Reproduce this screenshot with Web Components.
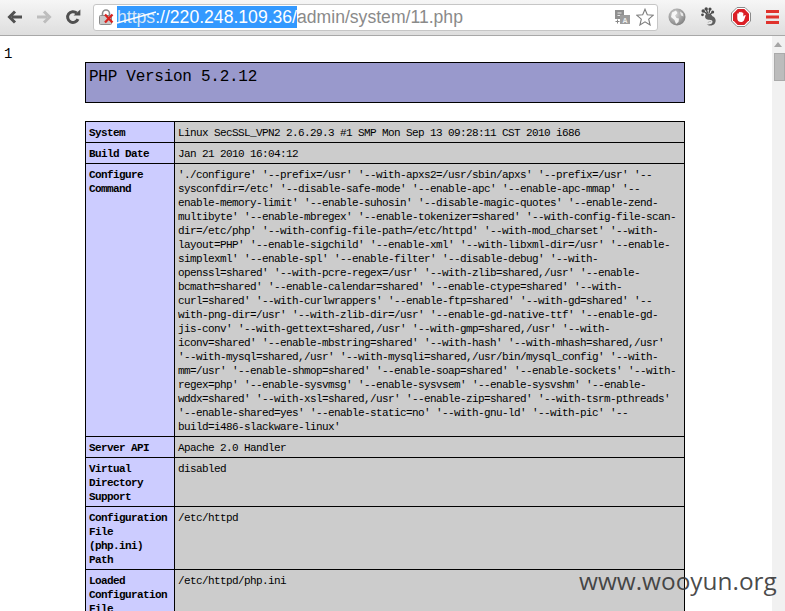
<!DOCTYPE html>
<html>
<head>
<meta charset="utf-8">
<title>phpinfo</title>
<style>
  html, body { margin: 0; height: 100%; overflow: hidden; background: #fff; }
  /* the text font has to reach the slotted text, so it goes on the light side too */
  info-row { font: 11px/14px "Liberation Mono", monospace; letter-spacing: -0.6px; color: #000; }
</style>
</head>
<body>
<browser-window>
  <page-number>1</page-number>
  <php-header>PHP Version 5.2.12</php-header>
  <info-table>
    <info-row><span slot="label">System</span>Linux SecSSL_VPN2 2.6.29.3 #1 SMP Mon Sep 13 09:28:11 CST 2010 i686</info-row>
    <info-row><span slot="label">Build Date</span>Jan 21 2010 16:04:12</info-row>
    <info-row><span slot="label">Configure
Command</span>'./configure' '--prefix=/usr' '--with-apxs2=/usr/sbin/apxs' '--prefix=/usr' '--
sysconfdir=/etc' '--disable-safe-mode' '--enable-apc' '--enable-apc-mmap' '--
enable-memory-limit' '--enable-suhosin' '--disable-magic-quotes' '--enable-zend-
multibyte' '--enable-mbregex' '--enable-tokenizer=shared' '--with-config-file-scan-
dir=/etc/php' '--with-config-file-path=/etc/httpd' '--with-mod_charset' '--with-
layout=PHP' '--enable-sigchild' '--enable-xml' '--with-libxml-dir=/usr' '--enable-
simplexml' '--enable-spl' '--enable-filter' '--disable-debug' '--with-
openssl=shared' '--with-pcre-regex=/usr' '--with-zlib=shared,/usr' '--enable-
bcmath=shared' '--enable-calendar=shared' '--enable-ctype=shared' '--with-
curl=shared' '--with-curlwrappers' '--enable-ftp=shared' '--with-gd=shared' '--
with-png-dir=/usr' '--with-zlib-dir=/usr' '--enable-gd-native-ttf' '--enable-gd-
jis-conv' '--with-gettext=shared,/usr' '--with-gmp=shared,/usr' '--with-
iconv=shared' '--enable-mbstring=shared' '--with-hash' '--with-mhash=shared,/usr'
'--with-mysql=shared,/usr' '--with-mysqli=shared,/usr/bin/mysql_config' '--with-
mm=/usr' '--enable-shmop=shared' '--enable-soap=shared' '--enable-sockets' '--with-
regex=php' '--enable-sysvmsg' '--enable-sysvsem' '--enable-sysvshm' '--enable-
wddx=shared' '--with-xsl=shared,/usr' '--enable-zip=shared' '--with-tsrm-pthreads'
'--enable-shared=yes' '--enable-static=no' '--with-gnu-ld' '--with-pic' '--
build=i486-slackware-linux'</info-row>
    <info-row><span slot="label">Server API</span>Apache 2.0 Handler</info-row>
    <info-row><span slot="label">Virtual
Directory
Support</span>disabled</info-row>
    <info-row><span slot="label">Configuration
File
(php.ini)
Path</span>/etc/httpd</info-row>
    <info-row><span slot="label">Loaded
Configuration
File</span>/etc/httpd/php.ini</info-row>
  </info-table>
</browser-window>

<script>
'use strict';

(function() {
  // toolbar pictures, all drawn on the pixel size given with them
  const ICONS = {
    back: [16, 14, `<path d="M15 7H5M8 1.5 2.5 7 8 12.5" fill="none" stroke="#505050" stroke-width="3"/>`],
    forward: [16, 14, `<path d="M1 7h10M8 1.5 13.5 7 8 12.5" fill="none" stroke="#bdbdbd" stroke-width="3"/>`],
    reload: [16, 16, `<path d="M13 10.2A5.4 5.4 0 1 1 11.6 4" fill="none" stroke="#505050" stroke-width="3"/><path d="M8.6 6.6 15.4 6.6 15.4 .4Z" fill="#505050"/>`],
    lock: [15, 16, `<path d="M3.5 7V4.5a3.5 3.5 0 0 1 7 0V7" fill="none" stroke="#8a8a8a" stroke-width="1.6"/><rect x=".5" y="6.5" width="12" height="9" rx="1" fill="#c9c9c9" stroke="#8c8c8c"/><path d="M6 5.5l7.5 8M13.5 5.5l-7.5 8" stroke="#d8231f" stroke-width="2.3"/>`],
    translate: [15, 15, `<rect x="0" y="0" width="9" height="9" fill="#8f8f8f"/><path d="M2.5 3h4M2.5 5.5h3" stroke="#e8e8e8"/><rect x="5" y="5" width="10" height="9" fill="#9d9d9d"/><text x="7.5" y="12.5" font-family="Liberation Sans" font-size="7" font-weight="700" fill="#eee">A</text><path d="M.5 11.5h4M2.5 9.5v4" stroke="#888"/>`],
    star: [18, 18, `<path d="M9 1.2 11.3 6.7 17.3 7.2 12.7 11.1 14.1 17 9 13.9 3.9 17 5.3 11.1 .7 7.2 6.7 6.7Z" fill="#fff" stroke="#7d7d7d" stroke-width="1.1"/>`],
    globe: [18, 18, `<defs><radialGradient id="g" cx=".4" cy=".35" r=".75"><stop offset="0" stop-color="#d8d8d8"/><stop offset="1" stop-color="#757575"/></radialGradient></defs><circle cx="9" cy="9" r="8.5" fill="url(#g)"/><path d="M4 4.5 8 2.5 9.5 5 7 7.5 8.5 10 11 10.5 10.5 14 8 16 6.5 12 3 9Z" fill="#fff" opacity=".85"/><path d="M12 3.5l3 2 .5 3-2.5-1Z" fill="#fff" opacity=".75"/>`],
    gecko: [16, 20, `<path d="M11.5 9.2C14.8 10.5 15.5 14 13.8 16.4 12 19 7.5 19.2 5.7 17.2 7.3 17.7 11 17.6 11.5 15 11.8 13.2 9.8 12.5 7.5 12.7 5 12.8 3.2 10.5 4.5 7.8 5.8 5.2 9.8 5.8 11.5 9.2Z" fill="#5f5f5f"/><path d="M10 14.6c-1.6-.5-3.2.4-2.9 1.5" fill="none" stroke="#b5b5b5"/><circle cx="2.2" cy="4" r="1.7" fill="#4a4a4a"/><circle cx="5.2" cy="1.9" r="1.7" fill="#4a4a4a"/><circle cx="9" cy="2" r="1.6" fill="#4a4a4a"/><circle cx="11.7" cy="4.9" r="1.5" fill="#4a4a4a"/><circle cx="1.5" cy="7.8" r="1.4" fill="#4a4a4a"/><path d="M2.5 4 6 7M5.2 2 6.5 6M9 2 8 6M11.7 5 9 7.5" stroke="#4a4a4a" stroke-width="1.3"/>`],
    stop: [20, 20, `<path d="M6 .5h8L19.5 6v8L14 19.5H6L.5 14V6Z" fill="#fff" stroke="#8a8a8a"/><path d="M6.7 2h6.6L18 6.7v6.6L13.3 18H6.7L2 13.3V6.7Z" fill="#db1f26"/><path d="M6.3 10V6.8a.8.8 0 0 1 1.5 0V9 5.5a.8.8 0 0 1 1.5 0V9 5.2a.8.8 0 0 1 1.5 0V9 6a.8.8 0 0 1 1.5 0v2.5l.3 1 1-1.3c.6-.6 1.3 0 1 .6L13 13.2c-.7 1.2-1.5 1.8-3 1.8-2.5 0-3.7-1.700-3.7-3.500Z" fill="#fff"/>`],
    menu: [13, 14, `<path d="M0 0h13v3H0ZM0 5.5h13v3H0ZM0 11h13v3H0Z" fill="#e0322c"/>`]
  };

  class ToolIcon extends HTMLElement {
    connectedCallback() {
      if (this.shadowRoot) return;
      const shadow = this.attachShadow({ mode: 'open' });
      const [w, h, body] = ICONS[this.getAttribute('name')];
      shadow.innerHTML = `
        <style>
          :host { display: block; flex: none; line-height: 0; }
        </style>
        <svg width="${w}" height="${h}" viewBox="0 0 ${w} ${h}">${body}</svg>
      `;
    }
  }

  class UrlBar extends HTMLElement {
    constructor() {
      super();
      const shadow = this.attachShadow({ mode: 'open' });
      shadow.innerHTML = `
        <style>
          :host {
            display: flex;
            align-items: center;
            box-sizing: border-box;
            width: 567px;
            height: 27px;
            padding: 0 3px 0 5px;
            background: #fff;
            border: 1px solid #c6c6c6;
            border-radius: 3px;
            font: 17.6px "Liberation Sans", sans-serif;
            color: #8a8a8a;
          }
          .url { flex: 1; margin-left: 3px; white-space: nowrap; overflow: hidden; }
          .sel { display: inline-block; line-height: 22px; background: #3399ff; color: #fff; position: relative; }
          .scheme { color: #d6e6f6; position: relative; }
          .scheme svg { position: absolute; left: 0; top: 2px; }
          tool-icon.tr { margin-right: 6px; }
        </style>
        <tool-icon name="lock"></tool-icon>
        <div class="url"><span class="sel"><span class="scheme">https<svg width="40" height="16"><path d="M0 14 39 3" stroke="#fff" stroke-width="1.5"/></svg></span>://220.248.109.36/</span>admin/system/11.php</div>
        <tool-icon class="tr" name="translate"></tool-icon>
        <tool-icon name="star"></tool-icon>
      `;
    }
  }

  class BrowserWindow extends HTMLElement {
    constructor() {
      super();
      const shadow = this.attachShadow({ mode: 'open' });
      shadow.innerHTML = `
        <style>
          :host { display: flex; flex-direction: column; height: 611px; position: relative; overflow: hidden; }
          .toolbar {
            display: flex;
            align-items: center;
            flex: none;
            box-sizing: border-box;
            height: 36px;
            padding: 0 6px 1px 7px;
            background: linear-gradient(#f6f6f6, #dedede);
            border-bottom: 1px solid #a8a8a8;
          }
          .back { margin-right: 13px; }
          .forward { margin-right: 13px; }
          .reload { margin-right: 12px; }
          .globe { margin: 0 15px 0 10px; }
          .gecko { margin-right: 14px; }
          .stop { margin-right: 15px; }
          .body { flex: 1; display: flex; min-height: 0; }
          .page { flex: 1; min-width: 0; overflow: hidden; background: #fff; }
          .scroll { flex: none; width: 13px; background: #f1f1f1; display: flex; flex-direction: column; align-items: flex-end; }
          .arrow { width: 0; height: 0; margin: 6px 3px 0 0; border: 4px solid transparent; border-top: 0; border-bottom: 5px solid #a5a5a5; }
          .thumb { box-sizing: border-box; width: 11px; height: 28px; margin-top: 6px; background: #bcbcbc; border: 1px solid #aaa; }
          .mark {
            position: absolute;
            left: 579px;
            top: 564px;
            font: 24.4px "Open Sans", sans-serif;
            color: rgba(50, 50, 50, .88);
            white-space: nowrap;
          }
        </style>
        <div class="toolbar">
          <tool-icon class="back" name="back"></tool-icon>
          <tool-icon class="forward" name="forward"></tool-icon>
          <tool-icon class="reload" name="reload"></tool-icon>
          <url-bar></url-bar>
          <tool-icon class="globe" name="globe"></tool-icon>
          <tool-icon class="gecko" name="gecko"></tool-icon>
          <tool-icon class="stop" name="stop"></tool-icon>
          <tool-icon name="menu"></tool-icon>
        </div>
        <div class="body">
          <div class="page"><slot></slot></div>
          <div class="scroll"><div class="arrow"></div><div class="thumb"></div></div>
        </div>
        <div class="mark">www.wooyun.org</div>
      `;
    }
  }

  class PageNumber extends HTMLElement {
    constructor() {
      super();
      this.attachShadow({ mode: 'open' }).innerHTML = `
        <style>
          :host { display: block; padding: 10px 0 0 4px; font: 14px/16px "Liberation Mono", monospace; color: #000; }
        </style>
        <slot></slot>
      `;
    }
  }

  class PhpHeader extends HTMLElement {
    constructor() {
      super();
      this.attachShadow({ mode: 'open' }).innerHTML = `
        <style>
          :host {
            display: block;
            box-sizing: border-box;
            width: 600px;
            height: 41px;
            margin: 0 0 18px 85px;
            padding: 5px 3px;
            background: #9999cc;
            border: 1px solid #000;
            font: 16px/18px "Liberation Mono", monospace;
            letter-spacing: -0.27px;
            color: #000;
          }
        </style>
        <slot></slot>
      `;
    }
  }

  class InfoTable extends HTMLElement {
    constructor() {
      super();
      this.attachShadow({ mode: 'open' }).innerHTML = `
        <style>
          :host {
            display: block;
            box-sizing: border-box;
            width: 600px;
            margin-left: 85px;
            border: 1px solid #000;
            border-bottom: 0;
          }
        </style>
        <slot></slot>
      `;
    }
  }

  class InfoRow extends HTMLElement {
    constructor() {
      super();
      this.attachShadow({ mode: 'open' }).innerHTML = `
        <style>
          :host { display: grid; grid-template-columns: 89px 1fr; border-bottom: 1px solid #000; }
          .label, .value { padding: 4px 3px 2px; white-space: pre; }
          .label { background: #ccccff; border-right: 1px solid #000; font-weight: bold; box-sizing: border-box; }
          .value { background: #cccccc; }
        </style>
        <div class="label"><slot name="label"></slot></div>
        <div class="value"><slot></slot></div>
      `;
    }
  }

  // let the browser know about the custom elements
  customElements.define('tool-icon', ToolIcon);
  customElements.define('url-bar', UrlBar);
  customElements.define('browser-window', BrowserWindow);
  customElements.define('page-number', PageNumber);
  customElements.define('php-header', PhpHeader);
  customElements.define('info-table', InfoTable);
  customElements.define('info-row', InfoRow);
})();
</script>
</body>
</html>
